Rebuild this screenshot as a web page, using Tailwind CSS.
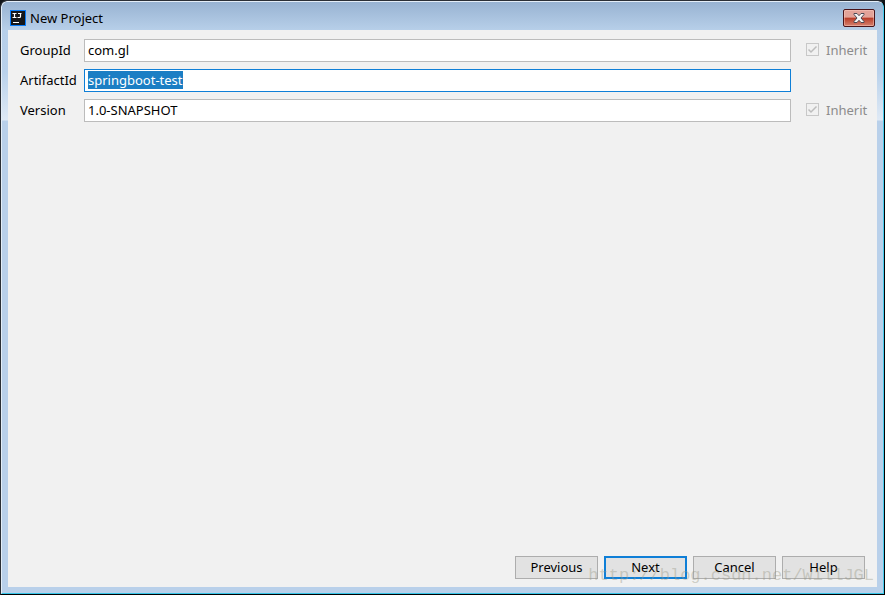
<!DOCTYPE html>
<html lang="en">
  <head>
    <meta charset="UTF-8" />
    <meta name="viewport" content="width=device-width, initial-scale=1.0" />
    <script src="https://cdn.jsdelivr.net/npm/@tailwindcss/browser@4"></script>
    <title>New Project</title>
  </head>
  <body class="bg-[#101418] text-black font-['Noto_Sans',sans-serif] text-[13px] leading-[18px]">
    <!-- Window frame -->
    <div class="relative flex flex-col h-screen overflow-hidden rounded-t-[7px] border border-[#2b2f36] border-b-black border-r-black">
      <div class="flex flex-col grow px-[6px] pb-[6px] rounded-t-md border border-[#e4eef8] border-r-[#45cbed] border-b-[#35c5e8] bg-[#b9d0ea] bg-[linear-gradient(to_bottom,#98b3d2_0px,#b7cfe9_28px,#b9d1eb_70px,#dfe9f5_118px,#b9d0ea_119px)]">
        <header class="flex items-center h-7 px-[2px] pt-1">
          <svg class="size-4 shrink-0" viewBox="0 0 16 16" aria-hidden="true">
            <rect width="16" height="16" fill="#087cfa" />
            <rect x="1" y="1" width="14" height="14" fill="#15171a" />
            <path d="M2.500 3.500h4M4.500 3.500v4M2.500 7.500h4M8 3.500h3.500M10.500 3.500v3q0 1-1 1H7.500M3 12.500h6" fill="none" stroke="#fff" stroke-width="1.200" />
          </svg>
          <h1 class="ml-1 grow">New Project</h1>
          <button type="button" aria-label="Close" class="flex items-center justify-center w-8 h-[18px] rounded-[2px] border border-[#49141a] bg-linear-to-b from-[#e3a399] from-45% via-[#b83a27] via-50% to-[#d5806e] shadow-[inset_0_0_0_1px_rgba(255,210,200,0.45)]">
            <svg class="w-3 h-[10px]" viewBox="0 0 12 10" aria-hidden="true">
              <path d="M1 .5h3L6 2.700 8 .5h3v1L8 5l3 3.500v1H8L6 7.300 4 9.500H1v-1L4 5 1 1.500z" fill="#f6f6f6" stroke="#4c4a55" stroke-width="1" />
            </svg>
          </button>
        </header>

        <form class="flex flex-col grow justify-between bg-[#f1f1f1] px-3 pt-[9px] pb-2">
          <div class="grid grid-cols-[64px_1fr_74px] items-center gap-y-[7px]">
            <label for="groupId" class="pb-[2px]">GroupId</label>
            <input id="groupId" type="text" value="com.gl" class="h-[23px] min-w-0 px-[3px] pb-[2px] bg-white border border-[#bcbcbc] outline-none" />
            <label class="flex items-center gap-[7px] pl-[15px] pb-[2px] text-[#8c8c8c]">
              <span class="grid shrink-0">
                <input type="checkbox" checked disabled class="appearance-none col-start-1 row-start-1 size-[13px] border border-[#c8c8c8]" />
                <svg class="col-start-1 row-start-1 size-[13px]" viewBox="0 0 13 13" fill="none" aria-hidden="true">
                  <path d="M2.500 6.500l2.500 2.500L10.500 3.500" stroke="#bdbdbd" stroke-width="1.500" />
                </svg>
              </span>
              Inherit
            </label>

            <label for="artifactId" class="pb-[2px]">ArtifactId</label>
            <input id="artifactId" type="text" value="springboot-test" class="h-[23px] min-w-0 px-[3px] pb-[2px] bg-white border border-[#0f7fd7] outline-none caret-transparent selection:bg-[#1a7dc4fe] selection:text-white" />
            <span></span>

            <label for="version" class="pb-[2px]">Version</label>
            <input id="version" type="text" value="1.0-SNAPSHOT" class="h-[23px] min-w-0 px-[3px] pb-[2px] bg-white border border-[#bcbcbc] outline-none" />
            <label class="flex items-center gap-[7px] pl-[15px] pb-[2px] text-[#8c8c8c]">
              <span class="grid shrink-0">
                <input type="checkbox" checked disabled class="appearance-none col-start-1 row-start-1 size-[13px] border border-[#c8c8c8]" />
                <svg class="col-start-1 row-start-1 size-[13px]" viewBox="0 0 13 13" fill="none" aria-hidden="true">
                  <path d="M2.500 6.500l2.500 2.500L10.500 3.500" stroke="#bdbdbd" stroke-width="1.500" />
                </svg>
              </span>
              Inherit
            </label>
          </div>

          <div class="flex justify-end gap-[6px]">
            <button type="button" class="w-[83px] h-[23px] bg-[#e2e2e2] border border-[#adadad] leading-none">Previous</button>
            <button type="submit" class="w-[83px] h-[23px] bg-[#e2e2e2] border-2 border-[#0f7fd7] leading-none">Next</button>
            <button type="button" class="w-[83px] h-[23px] bg-[#e2e2e2] border border-[#adadad] leading-none">Cancel</button>
            <button type="button" class="w-[83px] h-[23px] bg-[#e2e2e2] border border-[#adadad] leading-none">Help</button>
          </div>
        </form>
      </div>

      <!-- Watermark -->
      <p class="absolute right-[10px] bottom-2 pointer-events-none font-['Liberation_Mono',monospace] text-[17px] leading-5 text-[#969682]/40">http://blog.csdn.net/WillJGL</p>
    </div>

    <script>
      const artifactInput = document.getElementById("artifactId");
      artifactInput.focus();
      artifactInput.select();

      document.querySelector("form").addEventListener("submit", (e) => {
        e.preventDefault();
      });
    </script>
  </body>
</html>
